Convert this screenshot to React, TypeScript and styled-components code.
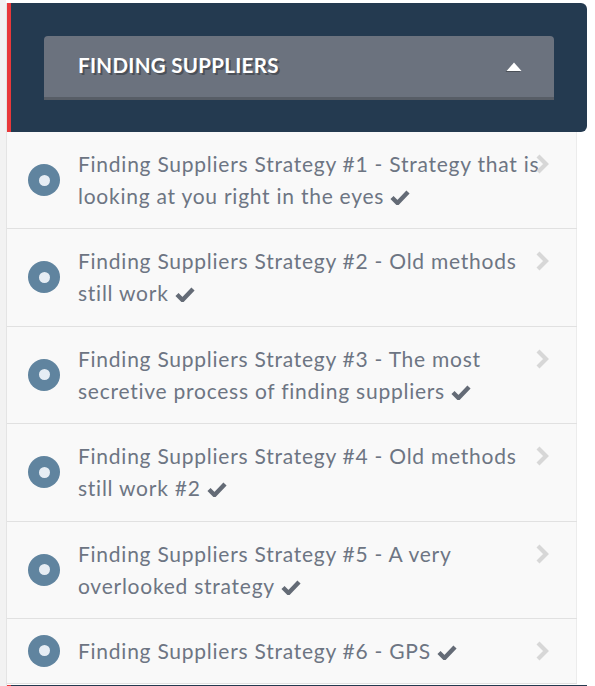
import React from "react";
import styled, { createGlobalStyle } from "styled-components";

const GlobalStyle = createGlobalStyle`
  html, body { margin: 0; padding: 0; background: #ffffff; }
  body { font-family: "Lato", "Noto Sans", sans-serif; }
`;

const Page = styled.div`
  width: 595px;
  min-height: 686px;
  box-sizing: border-box;
  border-left: 6px solid #f2f2f2;
  padding-top: 3px;
  overflow: hidden;
`;

const Panel = styled.div`
  margin-left: 1px;
  width: 580px;
  box-shadow: -1px 0 0 #e4e4e4;
`;

const SectionHeader = styled.div`
  box-sizing: border-box;
  width: 580px;
  background: #243a50;
  border-left: 4px solid #e8383a;
  border-radius: 0 6px 6px 0;
  padding: 33px 33px 32px 33px;
`;

const ToggleButton = styled.button`
  all: unset;
  box-sizing: border-box;
  display: flex;
  align-items: center;
  justify-content: space-between;
  width: 510px;
  height: 64px;
  padding: 0 32px 3px 34px;
  background: #6b727e;
  border-bottom: 3px solid #575d66;
  border-radius: 4px 4px 0 0;
  cursor: pointer;
`;

const HeaderTitle = styled.span`
  font-family: "Lato", "Noto Sans", sans-serif;
  font-weight: 700;
  font-size: 20.5px;
  color: #ffffff;
  text-shadow: 2px 2px 0 #4b5058;
  letter-spacing: 0.3px;
`;

const Caret = styled.svg`
  width: 16px;
  height: 10px;
  margin-top: 3px;
  filter: drop-shadow(-1px 1px 0 #4b5058);
`;

const List = styled.ul`
  list-style: none;
  margin: 0;
  padding: 0;
  width: 570px;
`;

const Item = styled.li`
  position: relative;
  display: flex;
  align-items: center;
  box-sizing: border-box;
  padding: 16px 40px 16.4px 21px;
  background: #f9f9f9;
  border-bottom: 1px solid #e1e1e1;
  box-shadow: inset -1px 0 0 #ececec;
`;

const Bullet = styled.span`
  flex: 0 0 auto;
  display: flex;
  align-items: center;
  justify-content: center;
  width: 32px;
  height: 32px;
  border-radius: 50%;
  background: #60849f;
  margin-right: 18px;
  &::after {
    content: "";
    width: 11px;
    height: 11px;
    border-radius: 50%;
    background: #e6edf4;
  }
`;

const Title = styled.span`
  font-family: "Lato", "Noto Sans", sans-serif;
  font-size: 21px;
  letter-spacing: 0.75px;
  line-height: 32px;
  color: #6d7583;
  white-space: nowrap;
`;

const CheckSvg = styled.svg`
  width: 20px;
  height: 16px;
  margin-left: 6px;
  vertical-align: -1px;
`;

const ChevronSvg = styled.svg`
  position: absolute;
  top: 22px;
  left: 528px;
  width: 14px;
  height: 20px;
`;

const NextSection = styled.div`
  width: 580px;
  height: 20px;
  background: #243a50;
  border-left: 4px solid #e8383a;
  box-sizing: border-box;
  margin-top: 1px;
`;

const Check = () => (
  <CheckSvg viewBox="0 0 20 16">
    <path d="M2 8.5 L7.5 14 L18 3" fill="none" stroke="#646b76" strokeWidth="4.4" strokeLinejoin="miter" />
  </CheckSvg>
);

const Chevron = () => (
  <ChevronSvg viewBox="0 0 14 20">
    <path d="M3 2 L11 10 L3 18" fill="none" stroke="#d7d7d7" strokeWidth="4.2" strokeLinejoin="miter" />
  </ChevronSvg>
);

const lessons: string[][] = [
  ["Finding Suppliers Strategy #1 - Strategy that is", "looking at you right in the eyes"],
  ["Finding Suppliers Strategy #2 - Old methods", "still work"],
  ["Finding Suppliers Strategy #3 - The most", "secretive process of finding suppliers"],
  ["Finding Suppliers Strategy #4 - Old methods", "still work #2"],
  ["Finding Suppliers Strategy #5 - A very", "overlooked strategy"],
  ["Finding Suppliers Strategy #6 - GPS"],
];

export default function App() {
  return (
    <>
      <GlobalStyle />
      <Page>
        <Panel>
          <SectionHeader>
            <ToggleButton>
              <HeaderTitle>FINDING SUPPLIERS</HeaderTitle>
              <Caret viewBox="0 0 16 10">
                <path d="M8 0.5 L15.5 9 L0.5 9 Z" fill="#ffffff" />
              </Caret>
            </ToggleButton>
          </SectionHeader>
          <List>
            {lessons.map((lines, i) => (
              <Item key={i}>
                <Bullet />
                <Title>
                  {lines.map((line, j) => (
                    <React.Fragment key={j}>
                      {j > 0 && <br />}
                      {line}
                      {j === lines.length - 1 && <Check />}
                    </React.Fragment>
                  ))}
                </Title>
                <Chevron />
              </Item>
            ))}
          </List>
          <NextSection />
        </Panel>
      </Page>
    </>
  );
}
